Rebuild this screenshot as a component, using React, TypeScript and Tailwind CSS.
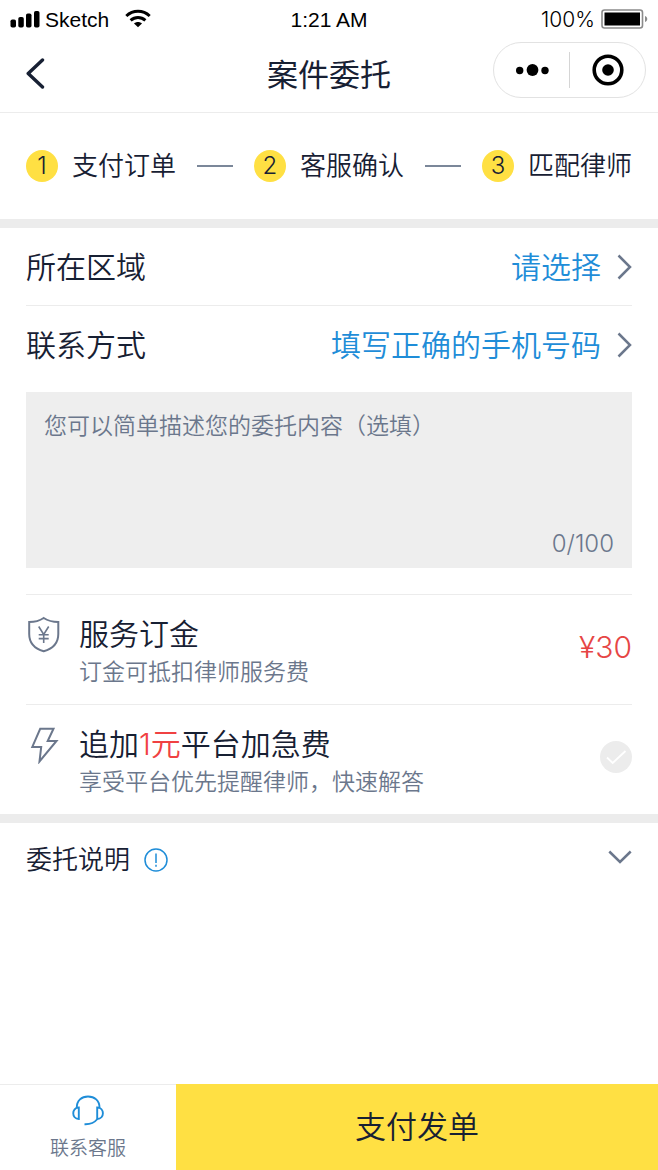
import { ReactNode, useState } from 'react'
import clsx from 'clsx'

const steps = ['支付订单', '客服确认', '匹配律师']

function Chevron({ className }: { className?: string }) {
  return (
    <svg width="15" height="26" viewBox="0 0 15 26" fill="none" stroke="currentColor" strokeWidth="2.5" className={className}>
      <path d="M1.5 1.5 13 13 1.5 24.5"/>
    </svg>
  )
}

function StatusBar() {
  return (
    <div className="grid grid-cols-[1fr_auto_1fr] items-center h-9 pt-1 pl-2.5 pr-2.5 text-[21px] leading-8 text-black font-normal font-['Liberation_Sans',sans-serif]">
      <div className="flex items-center">
        <svg width="31" height="18" viewBox="0 0 31 18" fill="currentColor">
          <rect x="0.5" y="8.5" width="5.5" height="8" rx="1.8"/>
          <rect x="8.3" y="6" width="5.5" height="10.5" rx="1.8"/>
          <rect x="16" y="2.5" width="5.5" height="14" rx="1.8"/>
          <rect x="24" y="0" width="5.5" height="16.5" rx="1.8"/>
        </svg>
        <span className="ml-1">Sketch</span>
        <svg width="26" height="22" viewBox="0 0 26 22" fill="none" stroke="currentColor" strokeWidth="3" className="ml-4">
          <path d="M1.3 7C8 0.8 18 0.8 24.7 7"/>
          <path d="M5.6 11.4C10 7.5 16 7.5 20.4 11.4"/>
          <path d="M13 18.3 9 14.5C11.3 12.5 14.7 12.5 17 14.5Z" fill="currentColor" stroke="none"/>
        </svg>
      </div>
      <span>1:21 AM</span>
      <div className="flex items-center justify-end gap-1.5">
        <span className="font-light font-[Inter,sans-serif]">100%</span>
        <svg width="47" height="22" viewBox="0 0 47 22" fill="none">
          <rect x="1" y="1" width="40.5" height="18" rx="2.5" stroke="#8a8a8a" strokeWidth="1.6"/>
          <rect x="3.5" y="3.5" width="35.5" height="13" fill="#000"/>
          <path d="M44 7C47 8 47 12 44 13Z" fill="#8a8a8a"/>
        </svg>
      </div>
    </div>
  )
}

function Header() {
  return (
    <header className="grid grid-cols-[1fr_auto_1fr] items-center pt-1.5 pb-1 px-3 border-b border-[#ececec]">
      <button type="button" aria-label="返回" className="justify-self-start pl-3">
        <svg width="22" height="34" viewBox="0 0 22 34" fill="none" stroke="currentColor" strokeWidth="3.4" strokeLinecap="round" strokeLinejoin="round">
          <path d="M18.5 2 4.2 15.5 18.5 29"/>
        </svg>
      </button>
      <h1 className="text-[31px] leading-[66px] font-normal">案件委托</h1>
      <div className="self-start justify-self-end flex items-center w-[153px] h-14 rounded-full border border-[#e2e2e2] text-black">
        <button type="button" aria-label="更多" className="flex-1 flex justify-center">
          <svg width="34" height="12" viewBox="0 0 34 12" fill="currentColor">
            <circle cx="4.7" cy="6.5" r="3.7"/>
            <circle cx="17.5" cy="6" r="5.9"/>
            <circle cx="30" cy="6.5" r="3.7"/>
          </svg>
        </button>
        <span className="w-px h-9 bg-[#d5d5d5]"/>
        <button type="button" aria-label="关闭" className="flex-1 flex justify-center">
          <svg width="32" height="32" viewBox="0 0 32 32" fill="none">
            <circle cx="16" cy="16" r="13.8" stroke="currentColor" strokeWidth="3.6"/>
            <circle cx="16" cy="16" r="5.8" fill="currentColor"/>
          </svg>
        </button>
      </div>
    </header>
  )
}

function Steps() {
  return (
    <ol className="flex items-center justify-between px-[26px] h-[106px] text-[26px] leading-10">
      {steps.map((name, i) => (
        <li key={name} className="contents">
          {i > 0 && <span className="w-9 h-0.5 bg-[#7b8799]"/>}
          <span className="flex items-center gap-3.5">
            <span className="flex items-center justify-center size-8 rounded-full bg-[#ffe043] text-2xl font-light font-[Inter,sans-serif]">{i + 1}</span>
            {name}
          </span>
        </li>
      ))}
    </ol>
  )
}

function Service({ icon, title, note, children }: { icon: ReactNode, title: ReactNode, note: string, children: ReactNode }) {
  return (
    <div className="flex items-center h-[110px] border-t border-[#ececec]">
      <div className="self-start pt-[21px] w-[53px] shrink-0 text-[#6b778c]">{icon}</div>
      <div className="flex-1 pt-1">
        <div className="text-[30px] leading-10">{title}</div>
        <div className="text-[23px] leading-9 text-[#6b778c]">{note}</div>
      </div>
      <div className="pb-1.5">{children}</div>
    </div>
  )
}

export default function App() {
  const [text, setText] = useState('')
  const [urgent, setUrgent] = useState(false)

  return (
    <div className="flex flex-col min-h-screen bg-white text-[#172033] font-[350] font-[Inter,'Noto_Sans_CJK_SC',sans-serif]">
      <StatusBar/>
      <Header/>
      <Steps/>

      <main className="border-t-9 border-[#ececec]">
        <section className="px-[26px]">
          <button type="button" className="flex items-center w-full h-[78px] border-b border-[#ececec] text-[30px] leading-10">
            <span className="flex-1 text-left">所在区域</span>
            <span className="text-[#1f8dd8]">请选择</span>
            <Chevron className="ml-4 text-[#6b778c]"/>
          </button>
          <div className="flex items-center h-[78px] text-[30px] leading-10">
            <label htmlFor="phone">联系方式</label>
            <input
              id="phone"
              type="tel"
              placeholder="填写正确的手机号码"
              className="flex-1 min-w-0 text-right text-[#1f8dd8] placeholder:text-[#1f8dd8] outline-none"
            />
            <Chevron className="ml-4 text-[#6b778c]"/>
          </div>

          <div className="mt-2 mb-[26px] px-[18px] pt-4 pb-1.5 bg-[#eee] text-[#6b778c]">
            <textarea
              aria-label="委托内容"
              maxLength={100}
              value={text}
              placeholder="您可以简单描述您的委托内容（选填）"
              className="block w-full h-[118px] text-[23px] leading-9 resize-none outline-none placeholder:text-[#6b778c]"
              onChange={(e) => setText(e.target.value)}
            />
            <div className="text-right text-2xl leading-9 font-light">{text.length}/100</div>
          </div>

          <Service
            title="服务订金"
            note="订金可抵扣律师服务费"
            icon={
              <svg width="35" height="38" viewBox="0 0 35 38" fill="none" stroke="currentColor" strokeWidth="2">
                <path d="M17.7 2C13.5 4.8 8.5 6 3.2 6V18C3.2 27 8 32.5 17.7 35.3C27.5 32.5 32.3 27 32.3 18V6C27 6 22 4.8 17.7 2Z"/>
                <path d="M12.7 10.5 17.7 18.5 22.7 10.5M17.7 18.5V27M12.7 18.8H22.7M12.7 22.6H22.7" strokeWidth="1.6"/>
              </svg>
            }
          >
            <span className="text-[30px] leading-10 font-light text-[#e64545]">¥30</span>
          </Service>
          <Service
            title={<>追加<span className="text-[#f04142]">1元</span>平台加急费</>}
            note="享受平台优先提醒律师，快速解答"
            icon={
              <svg width="35" height="38" viewBox="0 0 35 38" fill="none" stroke="currentColor" strokeWidth="2">
                <path d="M14.2 2.8H27.5L21.7 15H30.5L13.5 35.5L15.2 20.9H6.3Z"/>
              </svg>
            }
          >
            <label className="relative block">
              <input
                type="checkbox"
                aria-label="平台加急费"
                checked={urgent}
                className={clsx('block appearance-none size-8 rounded-full', urgent ? 'bg-[#ffe043]' : 'bg-[#ececec]')}
                onChange={(e) => setUrgent(e.target.checked)}
              />
              <svg viewBox="0 0 32 32" fill="none" stroke="#fff" strokeWidth="1.8" className="absolute inset-0 pointer-events-none">
                <path d="M7 16.5 12.7 22 25.5 10"/>
              </svg>
            </label>
          </Service>
        </section>

        <section className="border-t-9 border-[#ececec]">
          <button type="button" className="flex items-center w-full h-[74px] px-[26px] text-[26px] leading-10">
            委托说明
            <svg width="24" height="24" viewBox="0 0 24 24" fill="none" stroke="#1f8dd8" strokeWidth="1.5" className="ml-3.5">
              <circle cx="12" cy="12" r="11"/>
              <path d="M12 5.5V15M12 16.8V18.8"/>
            </svg>
            <svg width="24" height="20" viewBox="0 0 24 20" fill="none" stroke="#6b778c" strokeWidth="2.5" className="ml-auto">
              <path d="M1.3 1.5 12 12 22.7 1.5"/>
            </svg>
          </button>
        </section>
      </main>

      <footer className="flex mt-auto h-[86px]">
        <a href="#service" className="flex flex-col items-center w-44 pt-2.5 border-t border-[#ececec] text-[19px] leading-7 text-[#6b778c]">
          <svg width="32" height="32" viewBox="0 0 32 32" fill="none" stroke="#1f8dd8" strokeWidth="1.9">
            <path d="M4.8 12.5C4.8 5.5 9.5 1.5 16 1.5S27.5 5.5 27.5 12.5"/>
            <path d="M6.8 12.5C-0.6 12.5 -0.6 24 6.8 24ZM25.2 12.5C32.8 12.5 32.8 24 25.2 24Z"/>
            <path d="M25.5 24C22.5 27.5 18.5 29.5 12.5 29.2"/>
          </svg>
          <span className="mt-2">联系客服</span>
        </a>
        <button type="button" className="flex-1 bg-[#ffe043] text-[31px] leading-10">支付发单</button>
      </footer>
    </div>
  )
}
